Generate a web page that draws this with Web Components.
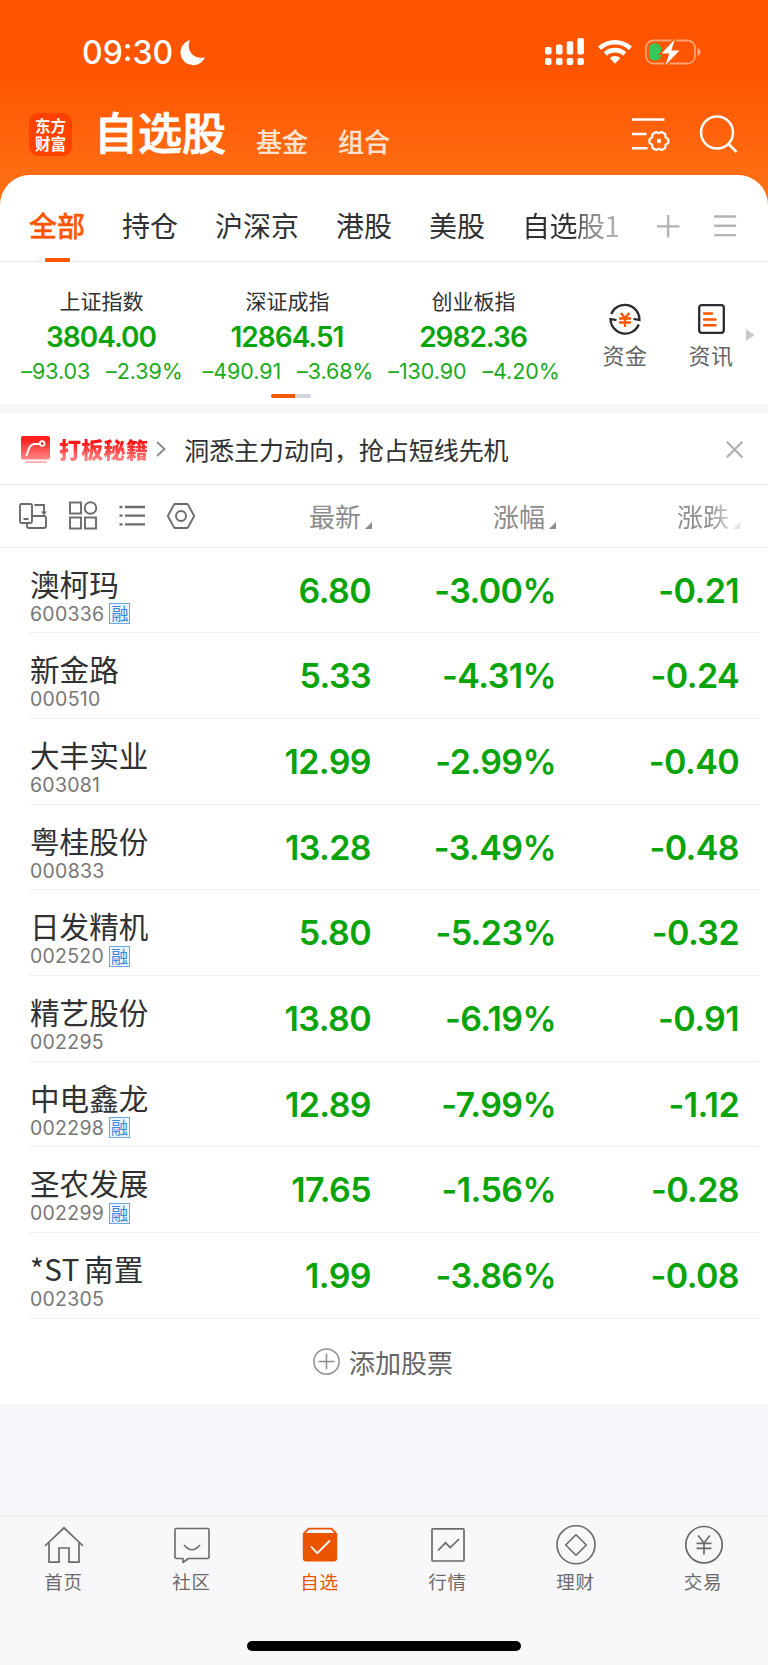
<!DOCTYPE html>
<html lang="zh-CN">
<head>
<meta charset="utf-8">
<meta name="viewport" content="width=device-width">
<title>自选股</title>
<style>
html, body { margin: 0; background: #f5f7fa; }
body {
    width: 768px;
    height: 1665px;
    overflow: hidden;
    font-family: Inter, "Noto Sans CJK SC", sans-serif;
    color: #303133;
    --orange: #ff5500;
    --green: #09a409;
    --line: #ececee;
}
</style>
</head>
<body>
<watchlist-app></watchlist-app>

<script>
const ICONS = {
    moon: `<path fill="currentColor" d="M10 0A12.8 12.8 0 1 0 25 17.5C14 19.500 5.500 11 10 0Z"/>`,
    signal: `<g fill="currentColor"><rect y="9" width="6.500" height="7.500" rx="1.800"/><rect x="11" y="6.500" width="6.500" height="10" rx="1.800"/><rect x="21.700" y="3.300" width="6.500" height="13.200" rx="1.800"/><rect x="32.400" width="6.500" height="16.500" rx="1.800"/><rect y="20" width="6.500" height="7" rx="2"/><rect x="11" y="20" width="6.500" height="7" rx="2"/><rect x="21.700" y="20" width="6.500" height="7" rx="2"/><rect x="32.400" y="20" width="6.500" height="7" rx="2"/></g>`,
    wifi: `<g fill="none" stroke="currentColor" stroke-width="4.600"><path d="M1.600 9.300A22.500 22.500 0 0 1 32.400 9.300"/><path d="M7.300 15A14.200 14.200 0 0 1 26.700 15"/></g><path fill="currentColor" d="M11.700 19.200a7.500 7.500 0 0 1 10.600 0L17 24.800Z"/>`,
    battery: `<rect x="1" y="1.500" width="49" height="23" rx="7.500" fill="none" stroke="#fff" stroke-opacity=".45" stroke-width="1.800"/><path d="M52.500 9v8q3-1 3-4t-3-4Z" fill="#fff" fill-opacity=".5"/><rect x="4" y="4.500" width="12" height="17" rx="5" fill="#34c759"/><path d="M30 0 16.500 14.500h7.800L20.500 26 34.500 11.500H26.300Z" fill="#fff" stroke="#ff5500" stroke-width="3" paint-order="stroke"/>`,
    filter: `<g fill="none" stroke="currentColor" stroke-width="2.500"><path d="M0 2.500h32.500M0 17h14.500M0 31.300h15.500"/><path stroke-width="2.200" stroke-linejoin="round" d="m24 15 2.800 1.300L29.800 15l3.400 2 .3 3.200 2.800 2.100v3.500l-2.800 2-.3 3.200-3.400 2-3-1.300-2.800 1.300-3.500-2-.3-3.200-2.700-2v-3.500l2.700-2.100.3-3.200Z"/></g><circle cx="27" cy="24" r="2.200" fill="currentColor"/>`,
    search: `<g fill="none" stroke="currentColor" stroke-width="2.500"><circle cx="17" cy="17.500" r="16"/><path d="m28.500 29 8 8"/></g>`,
    plus: `<path d="M0 11.300h22.500M11.200 0v22.500" stroke="currentColor" stroke-width="2.300"/>`,
    menu: `<path d="M1 1.500h20M1 10.800h20M1 20.100h20" stroke="currentColor" stroke-width="2.400" stroke-linecap="round"/>`,
    fund: `<g fill="none" stroke="#292b2e" stroke-width="2.200"><path d="M2.200 11A14.700 14.700 0 0 1 30.500 17l-6-1.200"/><path d="M29.800 21.500A14.700 14.700 0 0 1 1.500 16l6 1.200"/></g><path d="m11.800 10 4.200 5.200 4.200-5.200M10 15.500h12M10 19.500h12M16 15v9" fill="none" stroke="#ff5500" stroke-width="2.300"/>`,
    news: `<rect x="1.200" y="1.200" width="24.600" height="27.600" rx="2.500" fill="none" stroke="#292b2e" stroke-width="2.300"/><path d="M6 9.500h8M6 15.500h11.500M6 21.200h11.500" stroke="#ff5500" stroke-width="2.400" stroke-linecap="round"/>`,
    play: `<path d="M0 0 8.700 6 0 12Z" fill="#c9c9c9"/>`,
    promo: `<defs><linearGradient id="g" x2="0" y2="1"><stop offset=".15" stop-color="#ff1f1f"/><stop offset="1" stop-color="#ff8888"/></linearGradient></defs><rect width="29" height="23.500" rx="2" fill="url(#g)"/><path d="M5.500 19C8 15 7 8.500 14 8h5" fill="none" stroke="#fff" stroke-width="2" stroke-linecap="round"/><circle cx="21.200" cy="7.600" r="2.400" fill="none" stroke="#fff" stroke-width="1.700"/><path d="M5 26h20" stroke="#ffb5b5" stroke-width="2" stroke-linecap="round"/>`,
    chevron: `<path d="m1 1 7.500 7L1 15" fill="none" stroke="currentColor" stroke-width="1.800"/>`,
    close: `<path d="m.8.800 15.600 15.600M16.400.800.800 16.400" stroke="currentColor" stroke-width="2.200"/>`,
    rotate: `<g fill="none" stroke="currentColor" stroke-width="1.900"><rect x="1" y="1" width="12" height="19" rx="1.500"/><path d="M4.500 16h5M15.500 2H25v9M14 13h11q2 0 2 2v8q0 2-2 2H10q-2 0-2-2v-3"/></g><path d="M22 8.500h6l-3 3.800Z" fill="currentColor"/>`,
    grid: `<g fill="none" stroke="currentColor" stroke-width="1.900"><rect x="1" y="1.500" width="11" height="11"/><circle cx="21.500" cy="7" r="5.800"/><rect x="1" y="16.500" width="11" height="11"/><rect x="16" y="16.500" width="11" height="11"/></g>`,
    list: `<path d="M6 2h20M6 10.700h20M6 19.300h20M.5 2h3M.5 10.700h3M.5 19.300h3" stroke="currentColor" stroke-width="2.300"/>`,
    hexagon: `<g fill="none" stroke="currentColor" stroke-width="1.900"><path stroke-linejoin="round" d="M8 1h12q.7 0 1 .6l5.800 10.600q.4.800 0 1.600L21 24.400q-.3.600-1 .6H8q-.7 0-1-.6L1.200 13.800q-.4-.8 0-1.600L7 1.600Q7.300 1 8 1Z"/><circle cx="14" cy="13" r="5"/></g>`,
    corner: `<path d="M7 0v7H0Z" fill="currentColor"/>`,
    add: `<g fill="none" stroke="currentColor" stroke-width="1.500"><circle cx="13.500" cy="13.500" r="12.600"/><path d="M5.500 13.500h16M13.500 5.500v16"/></g>`,
    home: `<path d="M1 20 20 1.800 39 20M5 17v19.200h10V22h10v14.200h10V17" fill="none" stroke="currentColor" stroke-width="1.700"/>`,
    community: `<g fill="none" stroke="currentColor" stroke-width="1.600"><path stroke-linejoin="round" d="M4.500 2.500h31q1.500 0 1.500 1.500v27q0 1.500-1.500 1.500H16.500L11 36.500v-4H4.500Q3 32.500 3 31V4q0-1.500 1.500-1.500Z"/><path d="M12 19q8 9.500 16 0"/></g>`,
    picked: `<path d="M8 1.700h24l5.200 5.800V32q0 3.500-3.500 3.500H6.300Q2.800 35.500 2.800 32V7.500Z" fill="#eb5500"/><path d="M8.800 3.400h22.500L34 7H6Z" fill="#f8f8fb"/><path d="m11 20.500 6.300 6.700L30 14.500" fill="none" stroke="#fff" stroke-width="1.800"/>`,
    market: `<g fill="none" stroke="currentColor" stroke-width="1.700"><rect x="4" y="2.800" width="32" height="32.200" rx="1"/><path d="m10 24.500 7.500-7.700 4.800 4.800L31 13"/></g>`,
    wealth: `<g fill="none" stroke="currentColor" stroke-width="1.600"><circle cx="20" cy="18.800" r="19"/><path stroke-linejoin="round" d="M20 8.800 30.300 19 20 29.200 9.700 19Z"/></g>`,
    trade: `<g fill="none" stroke="currentColor" stroke-width="1.700"><circle cx="20" cy="18.700" r="18.200"/><path d="m14 9.500 6 7.500 6-7.500M12.500 17.300h15M12.500 22.300h15M20 17v11.500"/></g>`
};

const INDICES = [
    { name: "上证指数", value: "3804.00", change: "–93.03", percent: "–2.39%" },
    { name: "深证成指", value: "12864.51", change: "–490.91", percent: "–3.68%" },
    { name: "创业板指", value: "2982.36", change: "–130.90", percent: "–4.20%" }
];

const STOCKS = [
    { name: "澳柯玛", code: "600336", margin: true, price: "6.80", percent: "-3.00%", change: "-0.21" },
    { name: "新金路", code: "000510", price: "5.33", percent: "-4.31%", change: "-0.24" },
    { name: "大丰实业", code: "603081", price: "12.99", percent: "-2.99%", change: "-0.40" },
    { name: "粤桂股份", code: "000833", price: "13.28", percent: "-3.49%", change: "-0.48" },
    { name: "日发精机", code: "002520", margin: true, price: "5.80", percent: "-5.23%", change: "-0.32" },
    { name: "精艺股份", code: "002295", price: "13.80", percent: "-6.19%", change: "-0.91" },
    { name: "中电鑫龙", code: "002298", margin: true, price: "12.89", percent: "-7.99%", change: "-1.12" },
    { name: "圣农发展", code: "002299", margin: true, price: "17.65", percent: "-1.56%", change: "-0.28" },
    { prefix: "*ST", name: "南置", code: "002305", price: "1.99", percent: "-3.86%", change: "-0.08" }
];

const TABS = [
    ["home", "首页"], ["community", "社区"], ["picked", "自选"],
    ["market", "行情"], ["wealth", "理财"], ["trade", "交易"]
];

class BaseElement extends HTMLElement {
    connectedCallback() {
        if (this.shadowRoot) return;
        this.attachShadow({ mode: "open" });
        this.shadowRoot.innerHTML = `<style>:host { display: block; box-sizing: border-box; }</style>${this.getTemplate()}`;
    }
}

// <app-icon name="search" w="38" h="38">
class AppIcon extends BaseElement {
    getTemplate() {
        const w = this.getAttribute("w");
        const h = this.getAttribute("h");
        return `
<style>
:host { flex: none; width: ${w}px; height: ${h}px; }
svg { display: block; overflow: visible; }
</style>
<svg width="${w}" height="${h}" viewBox="0 0 ${w} ${h}">${ICONS[this.getAttribute("name")]}</svg>`;
    }
}

class StatusBar extends BaseElement {
    getTemplate() {
        return `
<style>
:host { display: flex; align-items: center; height: 104px; padding: 0 67px 0 82px; color: #fff; }
time { font-size: 32px; font-weight: 500; line-height: 40px; margin: 2px 7px 0 0; }
.system { display: flex; align-items: center; gap: 13px; margin: -1px 0 0 auto; }
app-icon[name="signal"] { margin-right: 1px; }
</style>
<time>09:30</time><app-icon name="moon" w="25" h="25"></app-icon>
<div class="system">
<app-icon name="signal" w="39" h="27"></app-icon>
<app-icon name="wifi" w="34" h="25"></app-icon>
<app-icon name="battery" w="56" h="26"></app-icon>
</div>`;
    }
}

class AppHeader extends BaseElement {
    getTemplate() {
        return `
<style>
:host { display: flex; height: 71px; padding: 9px 31px 0 29px; color: #fff; }
.logo {
    display: grid; place-content: center; width: 43px; height: 43px; border-radius: 9px; background: #ff4200;
    font: 700 15.500px/18px "Noto Sans CJK SC", sans-serif; text-align: center;
}
.logo span { margin-top: -2px; }
h1 { margin: -4px 0 0 22px; font: 500 44px/44px "Noto Sans CJK SC", sans-serif; -webkit-text-stroke: .9px; }
.link { margin: 12px 0 0 30px; font: 500 26px/32px "Noto Sans CJK SC", sans-serif; color: #ffe2d1; -webkit-text-stroke: .2px; }
.actions { display: flex; gap: 31px; margin: 2px 0 0 auto; }
.actions app-icon:first-child { margin-top: 2px; }
</style>
<div class="logo"><span>东方<br>财富</span></div>
<h1>自选股</h1><span class="link">基金</span><span class="link">组合</span>
<div class="actions">
<app-icon name="filter" w="37" h="34"></app-icon>
<app-icon name="search" w="37" h="37"></app-icon>
</div>`;
    }
}

class GroupTabs extends BaseElement {
    getTemplate() {
        return `
<style>
:host { display: flex; height: 87px; padding: 0 32px 0 29px; border-bottom: 1px solid var(--line); }
nav { display: flex; gap: 37px; font: 28px/40px "Noto Sans CJK SC", sans-serif; padding-top: 30px; white-space: nowrap; }
.active { position: relative; color: var(--orange); font-weight: 500; -webkit-text-stroke: .4px; }
.active::after { content: ""; position: absolute; left: 16px; bottom: -1px; width: 25px; height: 4px; border-radius: 1px; background: var(--orange); }
.fade { background: linear-gradient(90deg, #303133 56%, #777 62%, #bbb); background-clip: text; -webkit-background-clip: text; color: transparent; height: 40px; letter-spacing: -.5px; }
.tools { display: flex; gap: 35px; margin: 40px 0 0 auto; color: #b3b3b3; }
</style>
<nav><span class="active">全部</span><span>持仓</span><span>沪深京</span><span>港股</span><span>美股</span><span class="fade">自选股1</span></nav>
<div class="tools"><app-icon name="plus" w="22" h="22"></app-icon><app-icon name="menu" w="22" h="22"></app-icon></div>`;
    }
}

class IndexCard extends BaseElement {
    getTemplate() {
        return `
<style>
:host { flex: none; width: 186px; text-align: center; white-space: nowrap; }
.name { padding-right: 1px; font: 21px/30px "Noto Sans CJK SC", sans-serif; }
.value { margin-top: 5px; padding-right: 2px; font-size: 28px; font-weight: 600; line-height: 34px; color: var(--green); letter-spacing: -1px; }
.delta { display: flex; justify-content: center; gap: 16px; margin-top: 3px; font-size: 21.500px; line-height: 28px; color: #1bab1b; letter-spacing: -.1px; }
</style>
<div class="name"><slot name="name"></slot></div>
<div class="value"><slot name="value"></slot></div>
<div class="delta"><slot name="change"></slot><slot name="percent"></slot></div>`;
    }
}

class QuickLink extends BaseElement {
    getTemplate() {
        return `
<style>
:host { display: flex; flex-direction: column; align-items: center; width: 86px; color: #666; }
.glyph { display: flex; align-items: center; height: 33px; }
.label { margin-top: 3px; font: 22px/32px "Noto Sans CJK SC", sans-serif; letter-spacing: .5px; }
</style>
<div class="glyph"><slot name="icon"></slot></div>
<div class="label"><slot></slot></div>`;
    }
}

class IndexStrip extends BaseElement {
    getTemplate() {
        return `
<style>
:host { position: relative; display: flex; height: 142px; padding: 23px 13px 0 9px; }
.links { display: flex; flex: none; padding: 17px 0 0 15px; }
.next { margin: 44px 0 0 -8px; }
.pager { position: absolute; left: 271px; top: 132px; width: 40px; height: 4px; border-radius: 2px; background: linear-gradient(90deg, #f25a05 60%, #d5d6dd 60%); }
</style>
${INDICES.map((item) => `<index-card>
<span slot="name">${item.name}</span><span slot="value">${item.value}</span>
<span slot="change">${item.change}</span><span slot="percent">${item.percent}</span>
</index-card>`).join("")}
<div class="links">
<quick-link><app-icon slot="icon" name="fund" w="32" h="32"></app-icon>资金</quick-link>
<quick-link><app-icon slot="icon" name="news" w="27" h="30"></app-icon>资讯</quick-link>
</div>
<app-icon class="next" name="play" w="9" h="12"></app-icon>
<div class="pager"></div>`;
    }
}

class PromoStrip extends BaseElement {
    getTemplate() {
        return `
<style>
:host { display: flex; align-items: center; height: 81px; padding: 1px 25px 0 21px; border-top: 9px solid #f5f7fa; border-bottom: 1px solid var(--line); }
strong {
    margin: -3px 8px 0 9px; font: 900 22px/32px "Noto Sans CJK SC", sans-serif; letter-spacing: .3px;
    background: linear-gradient(#ff1717 35%, #ff8080 85%); background-clip: text; -webkit-background-clip: text; color: transparent;
}
.text { margin: -1px 0 0 19px; font: 25px/36px "Noto Sans CJK SC", sans-serif; letter-spacing: -.05px; }
.chevron { color: #888; }
.close { margin-left: auto; color: #b0b0b0; }
</style>
<app-icon name="promo" w="29" h="27"></app-icon><strong>打板秘籍</strong>
<app-icon class="chevron" name="chevron" w="9" h="16"></app-icon>
<span class="text">洞悉主力动向，抢占短线先机</span>
<app-icon class="close" name="close" w="17" h="17"></app-icon>`;
    }
}

class QuoteHead extends BaseElement {
    getTemplate() {
        return `
<style>
:host { display: grid; grid-template-columns: 213px 159px 184px 184px; align-items: center; height: 62.500px; border-bottom: 1px solid #f2f2f4; color: #6b6b6b; }
.views { display: flex; align-items: center; gap: 22px; padding-left: 19px; }
.col { display: flex; align-items: flex-end; justify-content: flex-end; gap: 4px; color: #8c8c8c; font: 26px/38px "Noto Sans CJK SC", sans-serif; }
.col app-icon { margin-bottom: 6px; }
.last span { background: linear-gradient(90deg, #8c8c8c 60%, #ccc); background-clip: text; -webkit-background-clip: text; color: transparent; }
.last app-icon { color: #e4e4e4; }
</style>
<div class="views">
<app-icon name="rotate" w="28" h="26"></app-icon>
<app-icon name="grid" w="28" h="29"></app-icon>
<app-icon name="list" w="26" h="21"></app-icon>
<app-icon name="hexagon" w="28" h="26"></app-icon>
</div>
<div class="col"><span>最新</span><app-icon name="corner" w="7" h="7"></app-icon></div>
<div class="col"><span>涨幅</span><app-icon name="corner" w="7" h="7"></app-icon></div>
<div class="col last"><span>涨跌</span><app-icon name="corner" w="7" h="7"></app-icon></div>`;
    }
}

class StockRow extends BaseElement {
    getTemplate() {
        const badge = this.hasAttribute("margin") ? `<i>融</i>` : "";
        return `
<style>
:host { display: grid; grid-template-columns: 186px 156px 185px 183px; height: 85.700px; margin: 0 9px 0 29px; border-bottom: 1px solid #f0f0f2; }
.name { padding: 16px 0 0 1px; font: 29.600px/39px "Noto Sans CJK SC", sans-serif; white-space: nowrap; }
::slotted(.prefix) { margin-right: 4px; letter-spacing: .5px; }
.code { display: flex; align-items: center; gap: 5px; height: 22px; padding-left: 1px; font-size: 19.500px; color: #777; letter-spacing: .25px; }
i { box-sizing: border-box; width: 21px; height: 21px; border: 1px solid #6ba6ea; background: #eef5fd; color: #3a86dc; font: 17px/18px "Noto Sans CJK SC", sans-serif; text-align: center; letter-spacing: 0; }
.num { padding-top: 22px; text-align: right; font-size: 34px; line-height: 42px; font-weight: 600; color: var(--green); letter-spacing: -.6px; }
</style>
<div><div class="name"><slot name="prefix"></slot><slot name="name"></slot></div><div class="code"><slot name="code"></slot>${badge}</div></div>
<div class="num"><slot name="price"></slot></div>
<div class="num"><slot name="percent"></slot></div>
<div class="num"><slot name="change"></slot></div>`;
    }
}

class AddStock extends BaseElement {
    getTemplate() {
        return `
<style>
:host { display: flex; justify-content: center; align-items: center; gap: 9px; height: 86px; padding-right: 2px; color: #8b8b93; }
span { color: #666; font: 26px/38px "Noto Sans CJK SC", sans-serif; }
</style>
<app-icon name="add" w="27" h="27"></app-icon><span><slot></slot></span>`;
    }
}

class TabBar extends BaseElement {
    getTemplate() {
        return `
<style>
:host { position: relative; height: 149px; border-top: 1px solid #e9eaec; background: #f8f8fb; }
nav { display: grid; grid-template-columns: repeat(6, 128px); padding-top: 9px; color: #6a6a6a; }
.tab { display: flex; flex-direction: column; align-items: center; }
.tab:last-child { padding-right: 1px; }
span { margin-top: 2px; padding-right: 1px; font: 18.500px/28px "Noto Sans CJK SC", sans-serif; letter-spacing: .8px; }
.active { color: #eb5500; }
.handle { position: absolute; left: 247px; top: 124px; width: 274px; height: 10px; border-radius: 5px; background: #000; }
</style>
<nav>${TABS.map(([icon, label]) => `<div class="tab${icon === "picked" ? " active" : ""}"><app-icon name="${icon}" w="40" h="39"></app-icon><span>${label}</span></div>`).join("")}</nav>
<div class="handle"></div>`;
    }
}

class WatchlistApp extends BaseElement {
    getTemplate() {
        return `
<style>
:host { display: flex; flex-direction: column; height: 1665px; background: linear-gradient(#ff5500 75px, #ff7419 205px, #f5f7fa 215px); }
main { height: 1229px; border-radius: 30px 30px 0 0; background: #fff; overflow: hidden; }
tab-bar { margin-top: auto; }
</style>
<status-bar></status-bar>
<app-header></app-header>
<main>
<group-tabs></group-tabs>
<index-strip></index-strip>
<promo-strip></promo-strip>
<quote-head></quote-head>
${STOCKS.map((stock) => `<stock-row ${stock.margin ? "margin" : ""}>
${stock.prefix ? `<span slot="prefix" class="prefix">${stock.prefix}</span>` : ""}<span slot="name">${stock.name}</span><span slot="code">${stock.code}</span>
<span slot="price">${stock.price}</span><span slot="percent">${stock.percent}</span><span slot="change">${stock.change}</span>
</stock-row>`).join("")}
<add-stock>添加股票</add-stock>
</main>
<tab-bar></tab-bar>`;
    }
}

customElements.define("app-icon", AppIcon);
customElements.define("status-bar", StatusBar);
customElements.define("app-header", AppHeader);
customElements.define("group-tabs", GroupTabs);
customElements.define("index-card", IndexCard);
customElements.define("quick-link", QuickLink);
customElements.define("index-strip", IndexStrip);
customElements.define("promo-strip", PromoStrip);
customElements.define("quote-head", QuoteHead);
customElements.define("stock-row", StockRow);
customElements.define("add-stock", AddStock);
customElements.define("tab-bar", TabBar);
customElements.define("watchlist-app", WatchlistApp);
</script>
</body>
</html>
